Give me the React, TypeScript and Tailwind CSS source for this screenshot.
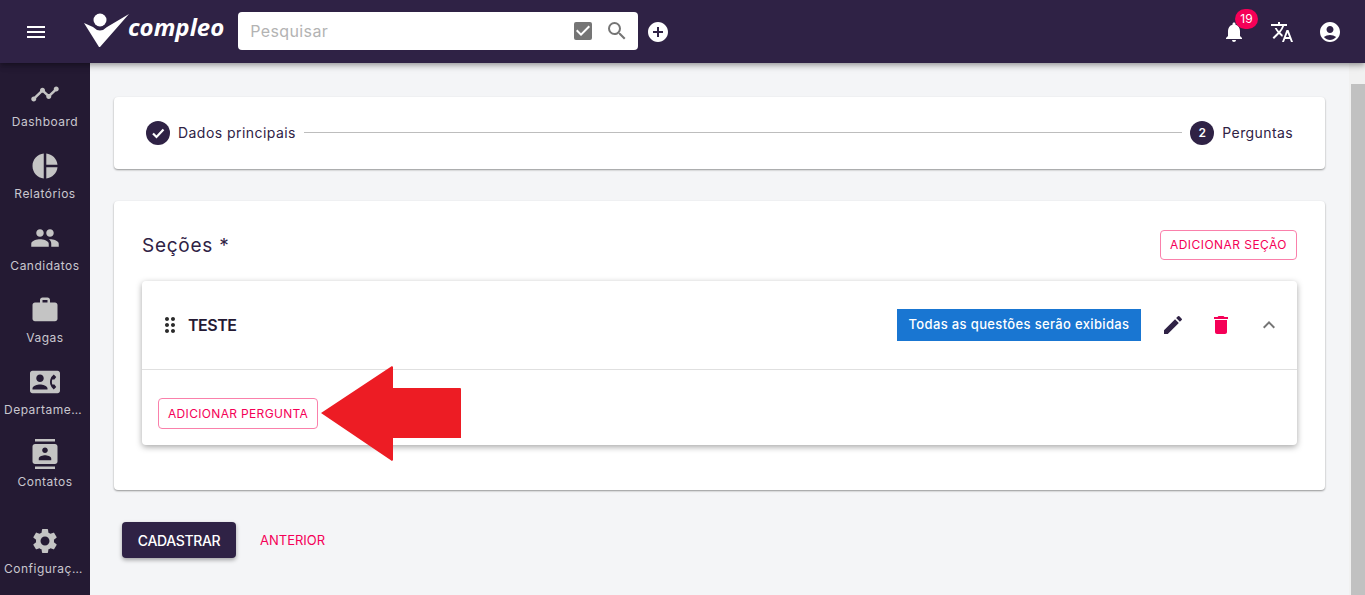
import {
  MdAccountCircle,
  MdAddCircle,
  MdCheckBox,
  MdContactPhone,
  MdContacts,
  MdDelete,
  MdDragIndicator,
  MdEdit,
  MdExpandLess,
  MdMenu,
  MdNotifications,
  MdPeople,
  MdPieChart,
  MdSearch,
  MdSettings,
  MdTimeline,
  MdTranslate,
  MdWork,
} from "react-icons/md";

const menuItems = [
  { label: "Dashboard", icon: MdTimeline },
  { label: "Relatórios", icon: MdPieChart },
  { label: "Candidatos", icon: MdPeople },
  { label: "Vagas", icon: MdWork },
  { label: "Departamentos", icon: MdContactPhone },
  { label: "Contatos", icon: MdContacts },
];

function SideItem({ label, icon: Icon }: { label: string; icon: typeof MdWork }) {
  return (
    <div className="flex h-[72px] w-[90px] flex-col items-center px-1 pt-[7px]">
      <Icon className="h-[30px] w-[30px] shrink-0 text-[#c4c4c4]" />
      <span className="mt-[4px] w-full truncate text-center text-[12px] leading-[18px] tracking-[0.5px] text-[#c9c7cf]">
        {label}
      </span>
    </div>
  );
}

function Logo() {
  return (
    <div className="flex items-center">
      <svg width="48" height="38" viewBox="0 0 48 38" className="shrink-0">
        <circle cx="17" cy="8" r="6.5" fill="#fff" />
        <path d="M1 11 L10 15 Q17 22 24 15 L46 2 L17 35 L16 35 Z" fill="#fff" />
      </svg>
      <span className="-ml-[3px] -mt-[7px] font-['Open_Sans',sans-serif] text-[24px] font-bold italic leading-none text-white">
        compleo
      </span>
    </div>
  );
}

function Header() {
  return (
    <header className="relative z-10 flex h-[63px] shrink-0 items-center bg-[#2f2245] shadow-[0_2px_4px_-1px_rgba(0,0,0,0.2),0_4px_5px_0_rgba(0,0,0,0.14),0_1px_10px_0_rgba(0,0,0,0.12)]">
      <MdMenu className="ml-[24px] h-6 w-6 text-white" />
      <div className="ml-[35px] mt-[-2px]">
        <Logo />
      </div>
      <div className="ml-[14px] -mt-px flex h-[38px] w-[400px] items-center rounded bg-white pl-3 pr-[9px]">
        <span className="flex-1 text-[16px] tracking-[0.4px] text-[#b3b3b3]">Pesquisar</span>
        <MdCheckBox className="h-6 w-6 text-[#757575]" />
        <MdSearch className="ml-[10px] h-6 w-6 text-[#757575]" />
      </div>
      <MdAddCircle className="ml-[8px] h-6 w-6 text-white" />
      <div className="ml-auto flex items-center pr-[23px]">
        <div className="relative">
          <MdNotifications className="h-6 w-6 text-white" />
          <span className="absolute -right-[12px] -top-[11px] flex h-5 min-w-[23px] items-center justify-center rounded-full bg-[#f50057] text-[12px] text-white">
            19
          </span>
        </div>
        <MdTranslate className="ml-[24px] h-6 w-6 text-white" />
        <MdAccountCircle className="ml-[24px] h-6 w-6 text-white" />
      </div>
    </header>
  );
}

function Stepper() {
  return (
    <div className="flex h-[72px] items-center rounded-[4px] bg-white px-8 pb-px shadow-[0_1px_2px_rgba(0,0,0,0.4)]">
      <span className="flex h-6 w-6 items-center justify-center rounded-full bg-[#2f2245]">
        <svg width="24" height="24" viewBox="0 0 24 24">
          <path d="M7 12.5 L10.5 16 L17.5 8.5" fill="none" stroke="#fff" strokeWidth="2.2" />
        </svg>
      </span>
      <span className="ml-2 text-[14px] tracking-[0.45px] text-[#2f2245]">Dados principais</span>
      <div className="mx-2 h-px flex-1 bg-[#bdbdbd]" />
      <span className="flex h-6 w-6 items-center justify-center rounded-full bg-[#2f2245] text-[12px] font-semibold text-white">
        2
      </span>
      <span className="ml-2 text-[14px] tracking-[0.4px] text-[#2f2245]">Perguntas</span>
    </div>
  );
}

function SectionCard() {
  return (
    <div className="mt-[21px] rounded-[4px] bg-white shadow-[0_2px_6px_rgba(0,0,0,0.35)]">
      <div className="flex h-[89px] items-center border-b border-[#e0e0e0] px-4">
        <MdDragIndicator className="h-6 w-6 text-[#2b2b2b]" />
        <span className="ml-[6px] text-[16px] font-semibold tracking-[-0.5px] text-[#241a33]">TESTE</span>
        <span className="ml-auto flex h-8 w-[244px] items-center justify-center bg-[#1976d2] text-[13px] font-medium tracking-[0.35px] text-white">
          Todas as questões serão exibidas
        </span>
        <MdEdit className="ml-5 h-6 w-6 text-[#2f2245]" />
        <MdDelete className="ml-6 h-6 w-6 text-[#f50057]" />
        <MdExpandLess className="ml-6 h-6 w-6 text-[#757575]" />
      </div>
      <div className="relative h-[75px] px-4 pt-[28px]">
        <button className="rounded-[4px] border border-[#fa80ab] px-[9px] text-[12px] leading-[29px] tracking-[0.33px] text-[#f50057]">
          ADICIONAR PERGUNTA
        </button>
        <svg width="142" height="96" viewBox="0 0 142 96" className="absolute left-[178px] top-[-4px]">
          <path d="M1 47 L72 0 L73 1 L73 22 L140 22 Q141 22 141 23 L141 72 L73 72 L73 94 L72 95 Z" fill="#ed1c24" />
        </svg>
      </div>
    </div>
  );
}

export default function App() {
  return (
    <div className="flex h-[595px] w-[1365px] flex-col overflow-hidden bg-[#f4f5f7] font-['Inter',sans-serif]">
      <Header />
      <div className="flex min-h-0 flex-1">
        <aside className="flex w-[90px] shrink-0 flex-col bg-[#241a33] pt-[9px]">
          {menuItems.map((item) => (
            <SideItem key={item.label} {...item} />
          ))}
          <div className="mt-[15px]">
            <SideItem label="Configurações" icon={MdSettings} />
          </div>
        </aside>
        <main className="min-w-0 flex-1 px-6 pt-[34px]">
          <Stepper />
          <div className="mt-8 h-[289px] rounded-[4px] bg-white px-7 pt-[29px] shadow-[0_1px_2px_rgba(0,0,0,0.4)]">
            <div className="flex h-[30px] items-center justify-between">
              <h2 className="pt-[2px] text-[19px] leading-[26px] tracking-[0.75px] text-[#2f2245]">Seções *</h2>
              <button className="rounded-[4px] border border-[#fa80ab] px-[9px] text-[12px] leading-[28px] tracking-[0.45px] text-[#f50057]">
                ADICIONAR SEÇÃO
              </button>
            </div>
            <SectionCard />
          </div>
          <div className="mt-8 flex items-center pl-2">
            <button className="h-9 w-[114px] rounded-[4px] bg-[#2f2245] text-[14px] font-medium tracking-[-0.35px] text-white shadow-[0_2px_4px_rgba(0,0,0,0.35)]">
              CADASTRAR
            </button>
            <span className="ml-6 pt-[2px] text-[13px] text-[#f50057]">ANTERIOR</span>
          </div>
        </main>
        <div className="flex w-[16px] shrink-0 flex-col bg-[#f1f1f1] pl-[2px] pt-[21px]">
          <div className="flex-1 bg-[#c1c1c1]" />
        </div>
      </div>
    </div>
  );
}
